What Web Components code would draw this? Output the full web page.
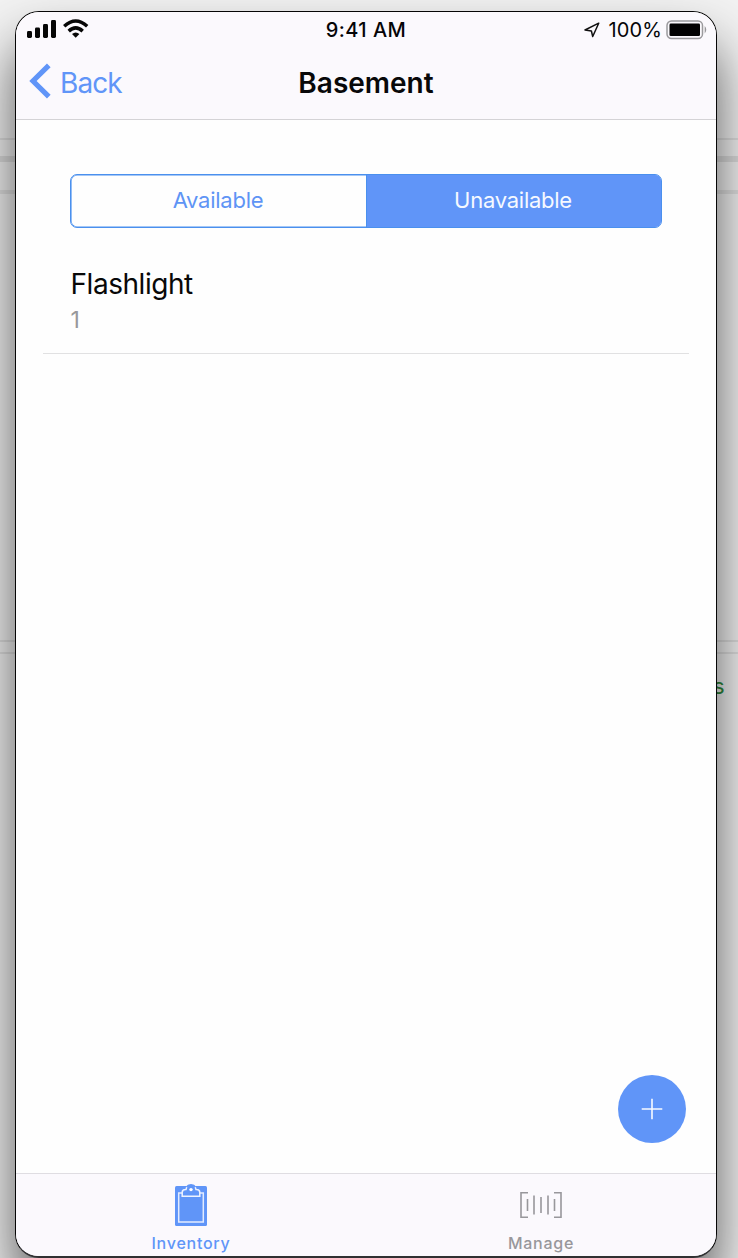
<!DOCTYPE html>
<html lang="en"><head><meta charset="utf-8"><title>Basement</title>
<style>
html,body{margin:0;height:100%;overflow:hidden}
body{font-family:Inter,"Liberation Sans",sans-serif;background:#f2f2f2}
</style></head><body>
<app-desktop>
  <phone-frame>
    <status-bar slot="top"></status-bar>
    <nav-bar slot="top" back="Back">Basement</nav-bar>
    <segmented-control><span slot="a">Available</span><span slot="b">Unavailable</span></segmented-control>
    <list-item>Flashlight<span slot="detail">1</span></list-item>
    <add-button slot="fab"></add-button>
    <tab-bar slot="bottom"></tab-bar>
  </phone-frame>
</app-desktop>
<script>
function define(name, markup, setup){
  const t=document.createElement('template'); t.innerHTML=markup;
  customElements.define(name, class extends HTMLElement{
    constructor(){super();this.attachShadow({mode:'open'}).append(t.content.cloneNode(true));}
    connectedCallback(){ if(setup) setup(this,this.shadowRoot); }
  });
}
define('app-desktop', `<style>
:host{display:block;position:relative;width:738px;height:1258px;overflow:hidden;box-sizing:border-box;padding:11px 0 0 15px;
background:linear-gradient(#dfdfdf,#dfdfdf) 0 138px/100% 2px no-repeat,linear-gradient(#dcdcdc,#dcdcdc) 0 156px/100% 6px no-repeat,linear-gradient(#e0e0e0,#e0e0e0) 0 190px/100% 4px no-repeat,linear-gradient(#dedede,#dedede) 0 640px/100% 2px no-repeat,linear-gradient(#dfdfdf,#dfdfdf) 0 652px/100% 2px no-repeat,#f2f2f2}
.s{position:absolute;left:713px;top:673px;font-size:22px;line-height:26px;color:#2f8a3c}
</style><span class="s">s</span><slot></slot>`);
define('phone-frame', `<style>
:host{display:flex;flex-direction:column;position:relative;box-sizing:border-box;width:702px;height:1247px;border:1px solid #060606;border-bottom:2px solid #303032;border-radius:24px;background:#fefefe;box-shadow:0 34px 54px rgba(0,0,0,.64)}
.top{background:#fbf9fd;height:107px;border-bottom:1px solid #d4d3d6;border-radius:23px 23px 0 0;flex:none}
main{flex:1;padding:54px 27px 0}
.fab{position:absolute;right:30px;bottom:113px}
</style><div class="top"><slot name="top"></slot></div><main><slot></slot></main><slot name="bottom"></slot><div class="fab"><slot name="fab"></slot></div>`);
define('status-bar', `<style>
:host{display:grid;grid-template-columns:1fr auto 1fr;align-items:center;height:36px;font-size:20px;line-height:24px;color:#050507}
.l{padding-left:11px;height:36px}.t{font-weight:500;letter-spacing:.45px}
.r{display:flex;justify-content:flex-end;align-items:center;height:36px;padding-right:8px}
.p{margin:0 4px 0 9px;letter-spacing:.1px}
svg{display:block}.r svg{position:relative;top:-.5px}
</style>
<div class="l"><svg width="64" height="36" fill="#060606"><rect x="0" y="19" width="5" height="7" rx="1.4"/><rect x="8" y="15.5" width="5" height="10.5" rx="1.4"/><rect x="16" y="12" width="5" height="14" rx="1.4"/><rect x="24" y="8" width="5" height="18" rx="1.4"/>
<g fill="none" stroke="#060606" stroke-width="3.5"><path d="M37.2 14.2Q48.7 3.8 60.2 14.2"/><path d="M41.7 19.1Q48.7 12.7 55.7 19.1"/></g><path d="M45 22Q48.7 18.8 52.4 22L48.7 25.8Z"/></svg></div>
<div class="t">9:41 AM</div>
<div class="r"><svg width="16" height="16" viewBox="0 0 16 16" fill="none" stroke="#111" stroke-width="1.5" stroke-linejoin="round"><path d="M14.7 1.2 1 8l6.4 1 1.3 5.5Z"/></svg><span class="p">100%</span>
<svg width="42" height="20" viewBox="0 0 42 20"><rect x="1" y="1" width="35.5" height="17.5" rx="4.5" fill="none" stroke="#9b9a9d" stroke-width="1.5"/><rect x="3.5" y="3.6" width="30.5" height="12.4" rx="1.3" fill="#020202"/><path d="M38.7 6Q41.8 9.7 38.7 13.5Z" fill="#98979a"/></svg></div>`);
define('nav-bar', `<style>
:host{display:grid;grid-template-columns:1fr auto 1fr;align-items:center;height:71px;font-size:28px;line-height:34px}
.b{display:flex;align-items:center;color:#6095f8;padding-left:13px;gap:9px;letter-spacing:-.9px}
.t{font-weight:600;color:#080809;letter-spacing:0}
svg{display:block}.b span,.t{position:relative;top:-1px}svg{margin-top:-5px}
</style><div class="b"><svg width="22" height="36" viewBox="0 0 22 36" fill="none" stroke="#6095f8" stroke-width="5.2"><path d="M19.8 2.4 4 18 19.8 33.6"/></svg><span></span></div><div class="t"><slot></slot></div>`,
(h,r)=>{r.querySelector('span').textContent=h.getAttribute('back')});
define('segmented-control', `<style>
:host{display:flex;box-sizing:border-box;height:54px;margin:0 27px;border:1.5px solid #4a90ee;border-radius:7px;overflow:hidden;font-size:22px;line-height:51px;text-align:center;color:#5e94f5;letter-spacing:-.25px;box-shadow:inset 0 0 0 .6px #4a90ee}
div{flex:1;padding-right:1px}.on{background:#6095f8;color:#f6f9ff;box-shadow:inset 1px 0 #4a90ee}
</style><div><slot name="a"></slot></div><div class="on"><slot name="b"></slot></div>`);
define('list-item', `<style>
:host{display:block;box-sizing:border-box;height:126px;border-bottom:1px solid #e1e1e2;padding:38px 27px 0 27.5px;font-size:28px;line-height:36px;color:#080808;letter-spacing:-.45px}
.d{font-size:23px;line-height:36px;color:#98989b}
</style><div><slot></slot></div><div class="d"><slot name="detail"></slot></div>`);
define('add-button', `<style>
:host{display:grid;place-items:center;width:68px;height:68px;border-radius:50%;background:#6095f8}svg{display:block}
</style><svg width="22" height="22" stroke="#f8faff" stroke-width="1.6"><path d="M11 .7v20.6M.7 11h20.6"/></svg>`);
define('tab-bar', `<style>
:host{display:grid;grid-template-columns:1fr 1fr;box-sizing:border-box;height:83px;border-top:1px solid #dfdde2;background:#fbf9fd;border-radius:0 0 22px 22px;font-size:16px;line-height:20px;font-weight:450;color:#98979b}
div{display:flex;flex-direction:column;align-items:center;padding-top:10px;gap:7px}.on{color:#6095f8}svg{display:block}
span{letter-spacing:.75px}
</style>
<div class="on"><svg width="32" height="42" viewBox="0 0 32 42"><rect y="2" width="32" height="40" rx="1.5" fill="#6095f8"/><path d="M7.2 9H3.7v29h24.6V9h-3.5" fill="none" stroke="#e2ebff" stroke-width="1.5"/><path d="M7.2 12.3V8.5Q7.2 5.5 10.5 5.5H11Q12 .8 16 .8T21 5.5H21.5Q24.8 5.5 24.8 8.5V12.3Z" fill="#6095f8" stroke="#eef3ff" stroke-width="1.5"/><path d="M11.8 3.2Q13 1.2 16 1.2T20.2 3.2" fill="none" stroke="#6095f8" stroke-width="2.2"/><circle cx="16" cy="5.6" r="1.7" fill="#fff"/></svg><span>Inventory</span></div>
<div><svg width="42" height="42" viewBox="0 0 42 42" fill="none" stroke="#98979b" stroke-width="1.6"><path d="M8 8.8H1v24.5H8M34 8.8h7v24.5H34M7.5 15v12M14 11.5v19M21 13v16M28 11.5v19M34.5 15v12"/></svg><span>Manage</span></div>`);
</script></body></html>
